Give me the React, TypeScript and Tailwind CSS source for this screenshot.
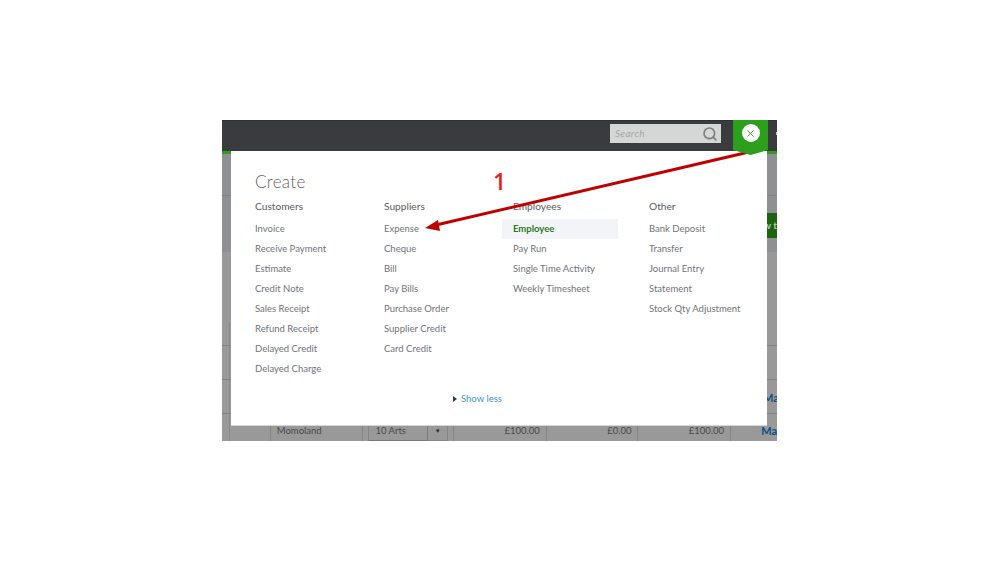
import React from 'react';
import { Search, X } from 'lucide-react';

const columns = [
  {
    title: 'Customers',
    width: 'w-[129px]',
    items: ['Invoice', 'Receive Payment', 'Estimate', 'Credit Note', 'Sales Receipt', 'Refund Receipt', 'Delayed Credit', 'Delayed Charge'],
  },
  {
    title: 'Suppliers',
    width: 'w-[129px]',
    items: ['Expense', 'Cheque', 'Bill', 'Pay Bills', 'Purchase Order', 'Supplier Credit', 'Card Credit'],
  },
  {
    title: 'Employees',
    width: 'w-[136px]',
    items: ['Employee', 'Pay Run', 'Single Time Activity', 'Weekly Timesheet'],
  },
  {
    title: 'Other',
    width: 'w-[110px]',
    items: ['Bank Deposit', 'Transfer', 'Journal Entry', 'Statement', 'Stock Qty Adjustment'],
  },
];

const rowLines = ['top-[75px]', 'top-[225px]', 'top-[259px]', 'top-[293px]'];

export default function App() {
  return (
    <div className="h-[562px] w-[999px] bg-white pl-[222px] pt-[120px] font-['Lato',sans-serif]">
      <div className="relative h-[321px] w-[555px] overflow-hidden bg-[#999999]">
        {/* Top bar */}
        <div className="flex h-[31px] items-start justify-end border-t border-[#2f3033] bg-[#3a3b3e] pr-[56px] pt-[3px]">
          <div className="flex h-[19px] w-[111px] items-center justify-between bg-[#d4d7d5] pl-[5px] pr-[3px]">
            <span className="text-[10px] italic tracking-[0.3px] text-[#a5a8a7]">Search</span>
            <Search size={16} strokeWidth={2.4} className="text-[#7a7e7d]" />
          </div>
        </div>
        <div className="h-[3px] bg-[#2ca01c]" />
        <div className="absolute right-0 top-[12px] h-[3px] w-px bg-[#c9c9c9]" />

        {/* Dimmed page behind the panel */}
        <div className="absolute left-0 right-0 top-[34px] h-[98px] bg-[#8f9091]" />
        {rowLines.map((line) => (
          <div key={line} className={`absolute left-0 right-0 h-px bg-[#828282] ${line}`} />
        ))}
        <div className="absolute left-[7px] top-[202px] h-[119px] w-px bg-[#8a8a8a]" />
        <div className="absolute left-[541px] top-[93px] flex h-[25px] w-[14px] items-center justify-end overflow-hidden whitespace-nowrap bg-[#1c6410] text-[10px] font-bold text-[#b9c9b5]">
          w t
        </div>
        <span className="absolute left-[541px] top-[270px] text-[11px] font-bold text-[#0a4f86]">Ma</span>

        {/* Momoland row */}
        <div className="absolute bottom-0 left-0 right-0 flex h-[30px] text-[9.5px] leading-[40px] text-[#4a4a4a]">
          <div className="w-[49px] border-r border-[#868686]" />
          <div className="w-[93px] border-r border-[#868686] pl-[6px]">Momoland</div>
          <div className="w-[6px] border-r border-[#868686]" />
          <div className="w-[59px] border-r border-b border-[#7a7a7a] pl-[6px]">10 Arts</div>
          <div className="w-[20px] border-r border-b border-[#868686] text-center text-[6px] text-[#2b2b2b]">▼</div>
          <div className="w-[6px] border-r border-[#868686]" />
          <div className="w-[93px] border-r border-[#868686] pr-[6px] text-right">£100.00</div>
          <div className="w-[92px] border-r border-[#868686] pr-[6px] text-right">£0.00</div>
          <div className="w-[93px] border-r border-[#868686] pr-[6px] text-right">£100.00</div>
          <span className="ml-[30px] text-[11px] font-bold text-[#0a4f86]">Ma</span>
        </div>

        {/* Create panel */}
        <div className="absolute left-[9px] top-[31px] h-[275px] w-[536px] border-b border-[#d6d6d6] bg-white pl-[24px] pt-[21px] text-[#727379]">
          <h2 className="text-[17px] font-light leading-[20px] tracking-[0.35px] text-[#5f6065]">Create</h2>
          <div className="mt-[6px] flex">
            {columns.map((col) => (
              <div key={col.title} className={col.width}>
                <h3 className="text-[10.2px] leading-[16px] text-[#5a5b60]">{col.title}</h3>
                <ul className="mt-[5px]">
                  {col.items.map((item) =>
                    item === 'Employee' ? (
                      <li
                        key={item}
                        className="-ml-[11px] mr-[6px] h-[20px] w-[116px] bg-[#f3f4f7] pl-[11px] text-[9.5px] font-bold leading-[20px] text-[#2c7a1a]"
                      >
                        {item}
                      </li>
                    ) : (
                      <li key={item} className="h-[20px] text-[9.5px] leading-[20px]">
                        {item}
                      </li>
                    ),
                  )}
                </ul>
              </div>
            ))}
          </div>
          <div className="absolute left-[222px] top-[241px] flex items-center gap-[4px] text-[9.5px] text-[#3f92d2]">
            <span className="h-0 w-0 border-y-[3px] border-l-[4px] border-y-transparent border-l-[#393a3d]" />
            Show less
          </div>
        </div>

        {/* Annotation */}
        <span className="absolute left-[271px] top-[46px] font-['Open_Sans',sans-serif] text-[23px] font-semibold leading-[30px] text-[#ee1c1c]">1</span>
        <svg className="absolute left-0 top-0" width="555" height="321" fill="none">
          <path d="M527 32 L214 105" stroke="#c00000" strokeWidth="3" />
          <path d="M203 108 L216 100 L218 111 Z" fill="#c00000" />
        </svg>

        {/* Active green tab with close button */}
        <div className="absolute left-[511px] top-0 flex h-[35px] w-[35px] justify-center bg-[#2ca01c] pt-[4px] [clip-path:polygon(0_0,100%_0,100%_86%,50%_100%,0_86%)]">
          <div className="flex h-[18px] w-[18px] items-center justify-center rounded-full bg-white">
            <X size={11} strokeWidth={2} className="text-[#2ca01c]" />
          </div>
        </div>
      </div>
    </div>
  );
}
